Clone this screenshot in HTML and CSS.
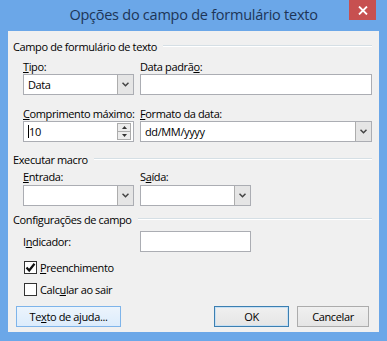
FILE: index.html
```html
<!DOCTYPE html>
<html lang="pt">
<head>
<meta charset="utf-8">
<title>Opções do campo de formulário texto</title>
<link rel="stylesheet" href="styles.css">
</head>
<body>
<div class="window">
  <div class="titlebar">
    <div class="title">Opções do campo de formulário texto</div>
    <div class="close"><svg width="10" height="9" viewBox="0 0 10 9"><path d="M1 0.5 L9 8.5 M9 0.5 L1 8.5" stroke="#fff" stroke-width="1.8" fill="none"/></svg></div>
  </div>
  <div class="client">
    <div class="group-head first"><span>Campo de formulário de texto</span><i class="rule"></i></div>
    <div class="grid row1">
      <div class="field">
        <div class="label"><u>T</u>ipo:</div>
        <div class="box combo"><span class="val">Data</span><span class="arrow"><svg width="7" height="5" viewBox="0 0 7 5"><path d="M0.5 0.8 L3.5 3.8 L6.5 0.8" stroke="#444" stroke-width="1.5" fill="none"/></svg></span></div>
      </div>
      <div class="field">
        <div class="label">Data padrã<u>o</u>:</div>
        <div class="box"></div>
      </div>
    </div>
    <div class="grid row2">
      <div class="field">
        <div class="label"><u>C</u>omprimento máximo:</div>
        <div class="box combo"><span class="val"><i class="caret"></i>10</span><span class="spin"><span class="sb"><svg width="5" height="3" viewBox="0 0 5 3"><path d="M0 3 L2.5 0 L5 3Z" fill="#333"/></svg></span><span class="sb"><svg width="5" height="3" viewBox="0 0 5 3"><path d="M0 0 L2.5 3 L5 0Z" fill="#333"/></svg></span></span></div>
      </div>
      <div class="field">
        <div class="label"><u>F</u>ormato da data:</div>
        <div class="box combo"><span class="val">dd/MM/yyyy</span><span class="arrow"><svg width="7" height="5" viewBox="0 0 7 5"><path d="M0.5 0.8 L3.5 3.8 L6.5 0.8" stroke="#444" stroke-width="1.5" fill="none"/></svg></span></div>
      </div>
    </div>
    <div class="group-head second"><span>Executar macro</span><i class="rule"></i></div>
    <div class="grid narrow row3">
      <div class="field">
        <div class="label"><u>E</u>ntrada:</div>
        <div class="box combo"><span class="val"></span><span class="arrow"><svg width="7" height="5" viewBox="0 0 7 5"><path d="M0.5 0.8 L3.5 3.8 L6.5 0.8" stroke="#444" stroke-width="1.5" fill="none"/></svg></span></div>
      </div>
      <div class="field">
        <div class="label">S<u>a</u>ída:</div>
        <div class="box combo"><span class="val"></span><span class="arrow"><svg width="7" height="5" viewBox="0 0 7 5"><path d="M0.5 0.8 L3.5 3.8 L6.5 0.8" stroke="#444" stroke-width="1.5" fill="none"/></svg></span></div>
      </div>
    </div>
    <div class="group-head third"><span>Configurações de campo</span><i class="rule"></i></div>
    <div class="grid narrow row4">
      <div class="label inline">I<u>n</u>dicador:</div>
      <div class="box"></div>
    </div>
    <div class="checks">
      <div class="check"><span class="cb"><svg width="11" height="11" viewBox="0 0 11 11"><path d="M1.5 5.5 L4.2 8.5 L9.5 1.8" stroke="#111" stroke-width="2.2" fill="none"/></svg></span><span><u>P</u>reenchimento</span></div>
      <div class="check"><span class="cb"></span><span>Calc<u>u</u>lar ao sair</span></div>
    </div>
    <div class="buttons">
      <div class="btn help">Te<u>x</u>to de ajuda...</div>
      <div class="spacer"></div>
      <div class="btn ok">OK</div>
      <div class="btn cancel">Cancelar</div>
    </div>
  </div>
</div>
</body>
</html>
```
FILE: styles.css
```css
html, body {
  margin: 0;
  padding: 0;
}
body {
  width: 387px;
  height: 341px;
  overflow: hidden;
  font-family: "Open Sans", "Noto Sans", sans-serif;
  font-size: 11px;
  color: #000;
}
u { text-decoration: underline; text-underline-offset: 1px; }
.window {
  width: 387px;
  height: 341px;
  background: #6ba7e8;
  display: flex;
  flex-direction: column;
}
.titlebar {
  height: 31px;
  position: relative;
  display: flex;
  justify-content: center;
}
.title {
  font-size: 14.5px;
  line-height: 20px;
  padding-top: 5px;
  color: #1d3557;
  letter-spacing: -0.25px;
}
.close {
  position: absolute;
  right: 11px;
  top: 0;
  width: 27px;
  height: 20px;
  background: #c75050;
  display: flex;
  align-items: center;
  justify-content: center;
}
.client {
  margin: 0 8px 9px 8px;
  height: 301px;
  background: #f0f0f0;
  display: flex;
  flex-direction: column;
  letter-spacing: -0.38px;
}
.group-head {
  display: flex;
  align-items: flex-start;
  gap: 6px;
  padding: 0 7px 0 5px;
  height: 15px;
  line-height: 15px;
}
.group-head .rule {
  flex: 1;
  height: 0;
  margin-top: 6px;
  border-top: 1px solid #d5dfe5;
  border-bottom: 1px solid #fff;
}
.group-head.first { margin-top: 8px; }
.group-head.second { margin-top: 10px; }
.group-head.third { margin-top: 6px; }
.grid {
  display: grid;
  grid-template-columns: 111px 232px;
  column-gap: 6px;
  padding: 0 7px 0 15px;
}
.grid.narrow { grid-template-columns: 111px 111px; }
.row1 { margin-top: 6px; }
.row2 { margin-top: 12px; }
.row3 { margin-top: 3px; }
.row4 { margin-top: 4px; align-items: center; }
.label {
  height: 14px;
  line-height: 14px;
  white-space: nowrap;
}
.row3 .label { height: 15px; }
.box {
  height: 21px;
  box-sizing: border-box;
  border: 1px solid #abadb3;
  background: #fff;
}
.combo {
  display: flex;
  align-items: stretch;
}
.val {
  flex: 1;
  padding-left: 4px;
  line-height: 19px;
  display: flex;
  align-items: center;
}
.caret {
  display: inline-block;
  width: 1px;
  height: 13px;
  background: #000;
}
.arrow {
  width: 16px;
  box-sizing: border-box;
  border-left: 1px solid #adadad;
  background: #e5e5e5;
  display: flex;
  align-items: center;
  justify-content: center;
}
.spin {
  width: 14px;
  margin: 1px 2px 1px 0;
  display: flex;
  flex-direction: column;
  border: 1px solid #acacac;
  box-sizing: border-box;
}
.sb {
  flex: 1;
  background: #ececec;
  display: flex;
  align-items: center;
  justify-content: center;
}
.sb + .sb { border-top: 1px solid #acacac; }
.label.inline { line-height: 14px; }
.checks {
  margin-top: 5px;
  padding-left: 16px;
  display: flex;
  flex-direction: column;
  gap: 2px;
}
.check {
  height: 20px;
  display: flex;
  align-items: center;
  gap: 3px;
}
.cb {
  width: 13px;
  height: 13px;
  box-sizing: border-box;
  border: 1px solid #333;
  background: #fff;
  display: flex;
  align-items: center;
  justify-content: center;
}
.buttons {
  margin-top: 7px;
  display: flex;
  padding: 0 10px 0 8px;
  gap: 8px;
}
.spacer { flex: 1; }
.btn {
  height: 21px;
  box-sizing: border-box;
  border: 1px solid #acacac;
  background: linear-gradient(#f0f0f0, #e5e5e5);
  display: flex;
  align-items: center;
  justify-content: center;
  white-space: nowrap;
}
.btn.help {
  width: 105px;
  background: linear-gradient(#ecf4fc, #dcecfc);
  border-color: #7eb4ea;
}
.btn.ok {
  width: 75px;
  border-color: #3c7fb1;
  box-shadow: inset 0 0 0 1px #c7e0f4;
}
.btn.cancel { width: 72px; }
```
